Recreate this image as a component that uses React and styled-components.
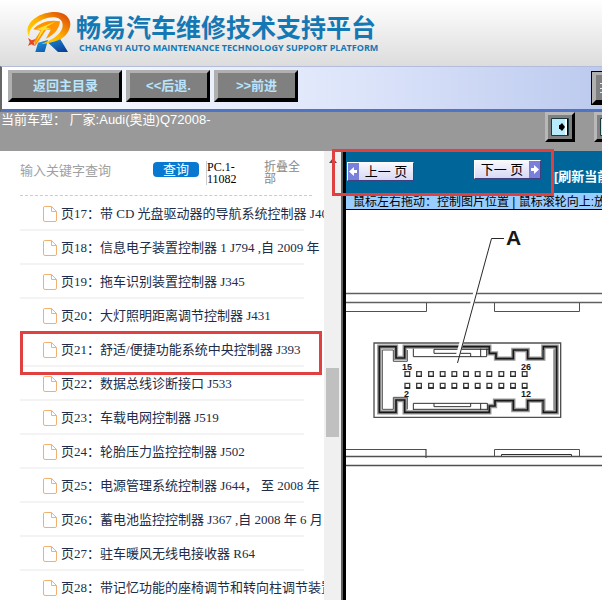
import React from 'react'
import styled, { createGlobalStyle } from 'styled-components'

const GlobalStyle = createGlobalStyle`
    * {
        box-sizing: border-box;
    }

    body {
        margin: 0;
        background-color: #ffffff;
        font-family: "Liberation Serif", "Noto Sans CJK SC", serif;
        font-size: 13px;
    }

    button, input {
        font: inherit;
    }
`

const Page = styled.div`
    height: 100vh;
    display: flex;
    flex-direction: column;
    overflow: hidden;
`

// Header

const Header = styled.header`
    flex: none;
    height: 66px;
    padding: 10px 24px;
    display: flex;
    gap: 4px;
    background: linear-gradient(#ffffff, #dcdcdc);
`

const Brand = styled.div`
    color: #1478b4;
    white-space: nowrap;
`

const Title = styled.h1`
    margin: 0;
    font-family: "Noto Sans CJK SC", sans-serif;
    font-size: 25px;
    line-height: 32px;
    font-weight: 700;
`

const Subtitle = styled.p`
    margin: 0;
    padding-left: 3px;
    font-family: "Open Sans", sans-serif;
    font-size: 9px;
    line-height: 12px;
    font-weight: 700;
`

// Toolbar

const Toolbar = styled.nav`
    flex: none;
    height: 46px;
    padding: 3px 0 0 6px;
    display: flex;
    gap: 4px;
    overflow: hidden;
    border-top: 1px solid #b4bcdc;
    border-bottom: 3px solid #5074c4;
    border-left: 2px solid #666666;
    background: linear-gradient(to right, #ffffff, #dce4fa 60%, #bccaee);
`

const BevelButton = styled.button`
    flex: none;
    width: ${props => props.$width}px;
    height: 32px;
    padding: 0;
    border: solid;
    border-width: 3px 3px 4px 4px;
    border-color: #b0b0b0 #000000 #000000 #b0b0b0;
    background-color: #808080;
    color: #b8e4fc;
    font-family: "Liberation Sans", "Noto Sans CJK SC", sans-serif;
    font-weight: 700;
    line-height: 20px;
`

const MenuButton = styled(BevelButton)`
    margin: 2px -22px 0 auto;
    outline: 1px solid #000000;
    text-align: left;

    svg {
        display: block;
        margin-left: 4px;
    }
`

// Vehicle bar

const VehicleBar = styled.div`
    flex: none;
    height: 39px;
    padding-left: 1px;
    display: flex;
    justify-content: space-between;
    overflow: hidden;
    background-color: #999999;
    color: #ffffff;
    font-family: "Liberation Sans", "Noto Sans CJK SC", sans-serif;
    line-height: 16px;
    white-space: pre;
`

const PaneButtons = styled.div`
    display: flex;
    gap: 19px;
    margin-right: -22px;
`

const PaneButton = styled.button`
    width: 30px;
    height: 30px;
    padding: 2px;
    border: 3px solid;
    border-color: #b8b8b8 #000000 #000000 #b8b8b8;
    background-color: #808080;

    svg {
        display: block;
    }
`

// Page list

const Main = styled.main`
    flex: 1;
    min-height: 0;
    display: flex;
`

const Sidebar = styled.aside`
    flex: none;
    width: 324px;
    overflow: hidden;
    white-space: nowrap;
`

const SearchForm = styled.form`
    height: 45px;
    margin: 0 12px 0 20px;
    display: flex;
    align-items: flex-start;
    border-bottom: 1px dashed #cccccc;
    line-height: 12px;
`

const SearchInput = styled.input`
    width: 133px;
    height: 18px;
    margin-top: 11px;
    padding: 0;
    border: 0;
    outline: 0;

    &::placeholder {
        color: #a0a0a0;
        opacity: 1;
    }
`

const SearchButton = styled.button`
    width: 46px;
    height: 15px;
    margin-top: 11px;
    padding: 0;
    border: 0;
    border-radius: 4px;
    background-color: #0878d0;
    color: #ffffff;
    line-height: 15px;
`

const DocCode = styled.span`
    width: 40px;
    margin: 10px 0 0 7px;
    border-left: 1px solid #cccccc;
    font-size: 12px;
    white-space: normal;
`

const CollapseLink = styled.a`
    width: 40px;
    margin: 10px 0 0 18px;
    color: #888888;
    font-size: 12px;
    text-decoration: none;
    white-space: normal;
`

const List = styled.ul`
    margin: 0;
    padding: 1px 0 0 20px;
    list-style: none;
`

const Item = styled.li`
    position: relative;
    height: 34px;

    &::after {
        content: "";
        display: block;
        width: 284px;
        height: 2px;
        background-color: #f3f3f3;
    }
`

const ItemLink = styled.a`
    height: 32px;
    padding: 2px 0 0 23px;
    display: flex;
    align-items: center;
    gap: 4px;
    color: #202c48;
    line-height: 20px;
    text-decoration: none;
    white-space: pre;

    svg {
        flex: none;
    }
`

const ItemMark = styled.span`
    position: absolute;
    top: -2px;
    left: 0;
    width: 302px;
    height: 44px;
    border: 3px solid #e04040;
    pointer-events: none;
    z-index: 1;
`

const ScrollTrack = styled.div`
    flex: none;
    width: 17px;
    padding: 7px 2px 0;
    display: flex;
    flex-direction: column;
    background-color: #f0f0f0;
`

const ScrollSpace = styled.div`
    flex: ${props => props.$share};
`

const ScrollThumb = styled.div`
    height: 69px;
    background-color: #c0c0c0;
`

// Viewer

const Viewer = styled.section`
    position: relative;
    flex: 1;
    min-width: 0;
    display: flex;
    flex-direction: column;
    border-left: 2px solid #606060;
    white-space: nowrap;
`

const ViewerBody = styled.div`
    flex: 1;
    min-height: 0;
    overflow: hidden;
    border-left: 3px solid #000000;
`

const Pager = styled.div`
    height: 42px;
    padding: 9px 0 0 1px;
    display: flex;
    align-items: flex-start;
    background-color: #006699;
`

const PageButton = styled.button`
    flex: none;
    width: 67px;
    height: 19px;
    margin-top: ${props => (props.$next ? 0 : 2)}px;
    margin-left: ${props => (props.$next ? 60 : 0)}px;
    padding: 0;
    display: flex;
    flex-direction: ${props => (props.$next ? 'row-reverse' : 'row')};
    align-items: center;
    border: 1px solid;
    border-color: #ffffff #404080 #404080 #ffffff;
    background: linear-gradient(#f8f8ff, #d8d8f4);
    color: #000000;
    font-family: "Liberation Sans", "Noto Sans CJK SC", sans-serif;
    line-height: 16px;

    span {
        flex: 1;
        text-align: center;
    }
`

const RefreshLink = styled.a`
    margin: 8px 0 0 13px;
    color: #ffffff;
    font-family: "Liberation Sans", "Noto Sans CJK SC", sans-serif;
    font-weight: 700;
    line-height: 18px;
    text-decoration: none;
`

const PagerMark = styled.span`
    position: absolute;
    top: -2px;
    left: -11px;
    width: 222px;
    height: 47px;
    border: 3px solid #e04040;
    pointer-events: none;
`

const Hint = styled.p`
    height: 17px;
    margin: 0;
    padding-left: 7px;
    border-bottom: 1px solid #000000;
    background-color: #99ccff;
    color: #000000;
    font-family: "Liberation Sans", "Noto Sans CJK SC", sans-serif;
    font-size: 12px;
    line-height: 18px;
`

const Diagram = styled.svg`
    display: block;
    font-family: "Liberation Sans", sans-serif;
    font-weight: 700;
`

const pages = [
    ['17', '带 CD 光盘驱动器的导航系统控制器 J401'],
    ['18', '信息电子装置控制器 1 J794 ,自 2009 年'],
    ['19', '拖车识别装置控制器 J345'],
    ['20', '大灯照明距离调节控制器 J431'],
    ['21', '舒适/便捷功能系统中央控制器 J393'],
    ['22', '数据总线诊断接口 J533'],
    ['23', '车载电网控制器 J519'],
    ['24', '轮胎压力监控控制器 J502'],
    ['25', '电源管理系统控制器 J644， 至 2008 年'],
    ['26', '蓄电池监控控制器 J367 ,自 2008 年 6 月'],
    ['27', '驻车暖风无线电接收器 R64'],
    ['28', '带记忆功能的座椅调节和转向柱调节装置'],
]

const Logo = () => (
    <svg width="48" height="44" viewBox="0 0 144 132" aria-hidden="true">
        <defs>
            <linearGradient id="ring" x1="0" y1="1" x2="1" y2="0">
                <stop offset="0" stopColor="#ffe600" />
                <stop offset="0.5" stopColor="#ffb000" />
                <stop offset="1" stopColor="#d83808" />
            </linearGradient>
            <linearGradient id="leg" x1="0" y1="0" x2="1" y2="1">
                <stop offset="0" stopColor="#20a0e8" />
                <stop offset="1" stopColor="#083890" />
            </linearGradient>
        </defs>
        <path d="M42 98 L72 90 L62 126 L34 126 Z M70 96 L108 86 L132 126 L102 126 Z" fill="url(#leg)" />
        <path d="M16 80 C-6 46 40 6 92 6 C132 6 150 36 132 66 C120 88 92 98 52 102 C92 88 116 68 116 46 C116 24 94 18 70 24 C36 34 14 54 16 80 Z" fill="url(#ring)" />
        <path d="M28 58 C48 36 76 28 108 34 C106 54 94 74 66 86 L80 60 L66 60 L34 108 L30 92 L50 62 Z" fill="#ff9400" />
        <path d="M36 58 L96 34 L66 52 L82 58 L60 60 L34 100 L52 60 Z" fill="#ffe030" />
        <path d="M12 84 L23 91 L35 87 L29 97 L33 108 L22 103 L12 108 L17 96 Z" fill="#e84820" />
    </svg>
)

const FileIcon = () => (
    <svg width="14" height="16" viewBox="0 0 14 16" fill="none" stroke="#f0b070" aria-hidden="true">
        <path d="M1.5 .5 H8.5 L13.5 5.5 V14 Q13.5 15.5 12 15.5 H2 Q.5 15.5 .5 14 V2 Q.5 .5 1.5 .5 Z M8.5 .5 V5.5 H13.5" />
    </svg>
)

const ArrowIcon = ({ right }) => (
    <svg width="11" height="17" viewBox="0 0 11 17" aria-hidden="true">
        <path d="M0 0H11V17H0Z" fill="#7880dc" />
        <path d={right ? 'M10 8.5 L5 4 V7 H2 V10 H5 V13 Z' : 'M1 8.5 L6 4 V7 H9 V10 H6 V13 Z'} fill="#ffffff" />
    </svg>
)

const PaneIcon = () => (
    <svg width="20" height="20" viewBox="0 0 20 20" aria-hidden="true">
        <path d="M1.5 1.5H18.5V18.5H1.5Z" fill="#b8ecfc" stroke="#183840" />
        <path d="M16 2V18" stroke="#ffffff" strokeWidth="2" />
        <path d="M17.5 2V18" stroke="#000000" />
        <path d="M9 8H10L12 6L15 10L12 14L10 12H9Z" fill="#000000" />
    </svg>
)

const shell = 'M58 50H108V84H134V50H388V70H408V86H460V60H503V86H550V50H590V247H550V212H503V240H460V212H405V228H388V247H134V210H108V247H58Z'

const pins = [142, 177, 213, 248, 283, 318, 353, 388, 424, 459, 494]

const ConnectorDiagram = () => (
    <Diagram width="256" height="390" viewBox="346 210 256 390" fill="none" stroke="#505050" role="img" aria-label="A">
        <path d="M346 293.5H602M346 302.5H602" stroke="#606060" strokeWidth="1.3" />
        <path d="M346 311.5H426.5V303M494.5 303V311.5H579.5V303" />
        <path d="M346 449.5H426M494.5 456V449.5H579.5V456" />
        <path d="M426 449V458" stroke="#202020" />
        <path d="M501.5 456V454.5H571.5V456" stroke="#303030" />
        <path d="M346 456.5H602M346 465.5H602" stroke="#505050" strokeWidth="1.3" />
        <g transform="translate(360 330) scale(.33333)">
            <path d="M42 39H602V262H42Z" strokeWidth="4" />
            <path d={shell} stroke="#989898" strokeWidth="13" />
            <path d={shell} stroke="#181818" strokeWidth="5" />
            <path d="M67 60H100V94H142V60M67 60V238H100V202H142V238" stroke="#505050" strokeWidth="3" />
            <path d="M550 60V86M550 212V240M582 58V240" strokeWidth="3" />
            <path d="M160 56V80H380V56M222 58V70H332V80M362 56V80M160 240V220H382V240M222 220V230H332V220M362 220V240" stroke="#303030" strokeWidth="3" />
            <path d="M160 238H382M222 58H388" stroke="#303030" strokeWidth="3" />
            {pins.map(x => (
                <g key={x} stroke="#404040" strokeWidth="4">
                    <path d={`M${x - 7} 125H${x + 7}V139H${x - 7}ZM${x - 7} 160H${x + 7}V174H${x - 7}Z`} />
                    <path d={`M${x - 8} 139H${x + 8}M${x - 8} 174H${x + 8}`} stroke="#202020" />
                </g>
            ))}
        </g>
        <path d="M489 243L458 355" stroke="#ffffff" strokeWidth="4" />
        <path d="M504 238.5H491.5L457.5 363" stroke="#282828" />
        <g fill="#181818" stroke="none">
            <text x="506" y="245" fontSize="21">A</text>
            <text x="402" y="370" fontSize="9">15</text>
            <text x="521" y="370" fontSize="9">26</text>
            <text x="404" y="397" fontSize="9">2</text>
            <text x="521" y="397" fontSize="9">12</text>
        </g>
    </Diagram>
)

const App = () => {
    return (
        <Page>
            <GlobalStyle />
            <Header>
                <Logo />
                <Brand>
                    <Title>畅易汽车维修技术支持平台</Title>
                    <Subtitle>CHANG YI AUTO MAINTENANCE TECHNOLOGY SUPPORT PLATFORM</Subtitle>
                </Brand>
            </Header>
            <Toolbar>
                <BevelButton $width={114}>返回主目录</BevelButton>
                <BevelButton $width={84}>&lt;&lt;后退.</BevelButton>
                <BevelButton $width={84}>&gt;&gt;前进</BevelButton>
                <MenuButton $width={32} aria-label="菜单">
                    <svg width="14" height="14" viewBox="0 0 14 14" stroke="#d8f0fc">
                        <path d="M0 2.5H14M0 7.5H14M0 11.5H14" />
                    </svg>
                </MenuButton>
            </Toolbar>
            <VehicleBar>
                <span>当前车型： 厂家:Audi(奥迪)Q72008-</span>
                <PaneButtons>
                    <PaneButton aria-label="左侧"><PaneIcon /></PaneButton>
                    <PaneButton aria-label="右侧"><PaneIcon /></PaneButton>
                </PaneButtons>
            </VehicleBar>
            <Main>
                <Sidebar>
                    <SearchForm onSubmit={e => e.preventDefault()}>
                        <SearchInput placeholder="输入关键字查询" aria-label="输入关键字查询" />
                        <SearchButton>查询</SearchButton>
                        <DocCode>PC.1-<br />11082</DocCode>
                        <CollapseLink href="#">折叠全部</CollapseLink>
                    </SearchForm>
                    <List>
                        {pages.map(([number, name]) => (
                            <Item key={number}>
                                <ItemLink href={`#page-${number}`}>
                                    <FileIcon />
                                    <span>页{number}：{name}</span>
                                </ItemLink>
                                {number === '21' && <ItemMark />}
                            </Item>
                        ))}
                    </List>
                </Sidebar>
                <ScrollTrack>
                    <svg width="13" height="5" viewBox="0 0 13 5" aria-hidden="true">
                        <path d="M3 5L7 0L11 5Z" fill="#505050" />
                    </svg>
                    <ScrollSpace $share={205} />
                    <ScrollThumb />
                    <ScrollSpace $share={163} />
                </ScrollTrack>
                <Viewer>
                    <ViewerBody>
                        <Pager>
                            <PageButton><ArrowIcon /><span>上一 页</span></PageButton>
                            <PageButton $next><ArrowIcon right /><span>下一 页</span></PageButton>
                            <RefreshLink href="#">[刷新当前页]</RefreshLink>
                        </Pager>
                        <Hint>鼠标左右拖动：控制图片位置 | 鼠标滚轮向上:放大</Hint>
                        <ConnectorDiagram />
                    </ViewerBody>
                    <PagerMark />
                </Viewer>
            </Main>
        </Page>
    )
}

export default App
